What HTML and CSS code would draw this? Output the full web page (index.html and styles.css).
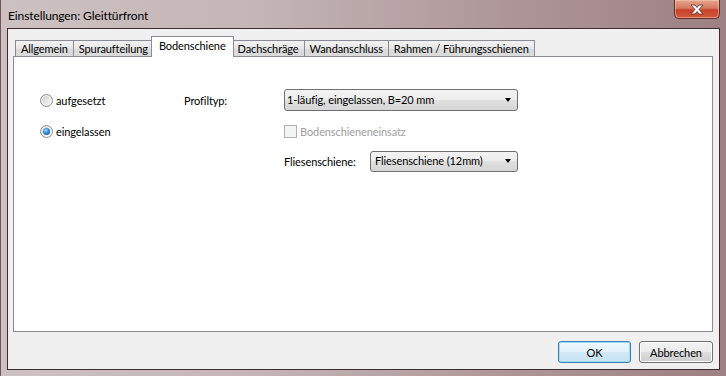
FILE: index.html
```html
<!DOCTYPE html>
<html>
<head>
<meta charset="utf-8">
<link rel="stylesheet" href="styles.css">
</head>
<body>
<div class="window">
  <div class="titlebar">
    <span class="title">Einstellungen: Gleittürfront</span>
    <div class="close">
      <svg width="18" height="11" viewBox="0 0 18 11">
        <path d="M3 1 L7 1 L9 3.5 L11 1 L15 1 L11 5.5 L15 10 L11 10 L9 7.5 L7 10 L3 10 L7 5.5 Z" fill="#fff" stroke="#5a2a24" stroke-width="0.8" stroke-linejoin="round"/>
      </svg>
    </div>
  </div>
  <div class="client">
    <div class="tabs">
      <div class="tab">Allgemein</div>
      <div class="tab">Spuraufteilung</div>
      <div class="tab active">Bodenschiene</div>
      <div class="tab">Dachschräge</div>
      <div class="tab">Wandanschluss</div>
      <div class="tab">Rahmen / Führungsschienen</div>
    </div>
    <div class="panel">
      <div class="form">
        <label class="radio"><span class="dot"></span>aufgesetzt</label>
        <span class="label">Profiltyp:</span>
        <div class="combo">1-läufig, eingelassen, B=20 mm<span class="arrow"></span></div>

        <label class="radio checked"><span class="dot"></span>eingelassen</label>
        <span></span>
        <label class="check disabled"><span class="box"></span>Bodenschieneneinsatz</label>

        <span></span>
        <span></span>
        <div class="row3">
          <span class="label3">Fliesenschiene:</span>
          <div class="combo small">Fliesenschiene (12mm)<span class="arrow"></span></div>
        </div>
      </div>
    </div>
    <div class="buttons">
      <div class="btn default">OK</div>
      <div class="btn">Abbrechen</div>
    </div>
  </div>
</div>
</body>
</html>
```
FILE: styles.css
```css
html, body {
  margin: 0;
  padding: 0;
  width: 726px;
  height: 376px;
  overflow: hidden;
}
body {
  font-family: Lato, "Open Sans", sans-serif;
  font-size: 11px;
  letter-spacing: -0.1px;
  color: #000;
}
.window {
  width: 726px;
  height: 376px;
  box-sizing: border-box;
  background: linear-gradient(90deg, #cdc1c2 0%, #c4b5b6 35%, #ae9698 70%, #9c8083 100%);
  border-left: 1px solid #6e5557;
  display: flex;
  flex-direction: column;
}
.titlebar {
  height: 28px;
  display: flex;
  justify-content: space-between;
  align-items: flex-start;
  flex-shrink: 0;
}
.title {
  margin-top: 8px;
  margin-left: 7px;
  font-size: 12px;
  letter-spacing: -0.1px;
  color: #000;
}
.close {
  width: 46px;
  height: 19px;
  margin-right: 6px;
  box-sizing: border-box;
  border: 1px solid #5e2d27;
  border-top: none;
  border-radius: 0 0 5px 5px;
  background: linear-gradient(#e4a58f 0%, #d77a62 45%, #c7412a 55%, #d25a3c 100%);
  box-shadow: inset 0 0 0 1px rgba(255, 210, 190, 0.5);
  display: flex;
  align-items: center;
  justify-content: center;
}
.client {
  margin-left: 6px;
  width: 713px;
  height: 342px;
  box-sizing: border-box;
  border: 1px solid #3e2c2e;
  background: #f0f0f0;
  padding: 7px 6px 0 5px;
  display: flex;
  flex-direction: column;
}
.tabs {
  display: flex;
  align-items: flex-end;
  height: 20px;
  padding-left: 2px;
  position: relative;
  z-index: 1;
}
.tab {
  height: 16px;
  box-sizing: border-box;
  padding: 0 5px;
  border: 1px solid #898c95;
  border-bottom: none;
  margin-left: -1px;
  background: linear-gradient(#f2f2f2, #e6e6e6 50%, #dcdcdc 50%, #dadada);
  display: flex;
  align-items: center;
  white-space: nowrap;
}
.tab:first-child {
  margin-left: 0;
}
.tab.active {
  height: 21px;
  margin: 0 -2px -1px -3px;
  padding: 0 7px 3px;
  background: #fff;
  position: relative;
  z-index: 2;
}
.tab.active + .tab {
  margin-left: 0;
}
.panel {
  height: 276px;
  box-sizing: border-box;
  border: 1px solid #898c95;
  background: #fff;
  padding: 32px 0 0 26px;
}
.form {
  display: grid;
  grid-template-columns: 144px 100px 234px;
  grid-template-rows: 22px 20px 20px;
  row-gap: 10px;
  align-items: center;
}
.radio, .check {
  display: flex;
  align-items: center;
  gap: 3px;
}
.dot {
  width: 13px;
  height: 13px;
  box-sizing: border-box;
  border-radius: 50%;
  border: 1px solid #8e8f8f;
  background: linear-gradient(135deg, #c9c9c9 0%, #e4e4e4 50%, #fafafa 100%);
  box-shadow: inset 0 0 0 1px #f4f4f4;
  display: flex;
  align-items: center;
  justify-content: center;
}
.radio.checked .dot::after {
  content: "";
  width: 7px;
  height: 7px;
  border-radius: 50%;
  background: radial-gradient(circle at 40% 35%, #9ee0ff 0%, #2e8ad8 45%, #0b4f9a 100%);
}
.box {
  width: 13px;
  height: 13px;
  box-sizing: border-box;
  border: 1px solid #b1b1b1;
  background: #f4f4f4;
}
.check.disabled {
  color: #a0a0a0;
}
.combo {
  height: 22px;
  box-sizing: border-box;
  border: 1px solid #707070;
  border-radius: 3px;
  background: linear-gradient(#f3f3f3 0%, #ececec 50%, #e0e0e0 50%, #d6d6d6 100%);
  padding: 0 0 1px 2px;
  display: flex;
  align-items: center;
  justify-content: space-between;
  position: relative;
}
.combo.small {
  width: 148px;
  height: 21px;
  padding-left: 4px;
}
.arrow {
  width: 0;
  height: 0;
  border-left: 3.5px solid transparent;
  border-right: 3.5px solid transparent;
  border-top: 4px solid #000;
  margin-right: 6px;
}
.row3 {
  display: flex;
  align-items: center;
}
.label3 {
  width: 86px;
}
.buttons {
  display: flex;
  justify-content: flex-end;
  gap: 8px;
  margin-top: 9px;
}
.btn {
  width: 73px;
  height: 22px;
  box-sizing: border-box;
  border: 1px solid #707070;
  border-radius: 3px;
  background: linear-gradient(#f2f2f2 0%, #ebebeb 50%, #dddddd 50%, #cfcfcf 100%);
  box-shadow: inset 0 0 0 1px #fcfcfc;
  display: flex;
  align-items: center;
  justify-content: center;
}
.btn.default {
  border-color: #3c7fb1;
  background: linear-gradient(#eef7fd 0%, #e2f1fb 50%, #d2e9f8 50%, #c6e1f3 100%);
  box-shadow: inset 0 0 0 1px #9fdcf7;
}
.btn + .btn {
  width: 74px;
}
```
